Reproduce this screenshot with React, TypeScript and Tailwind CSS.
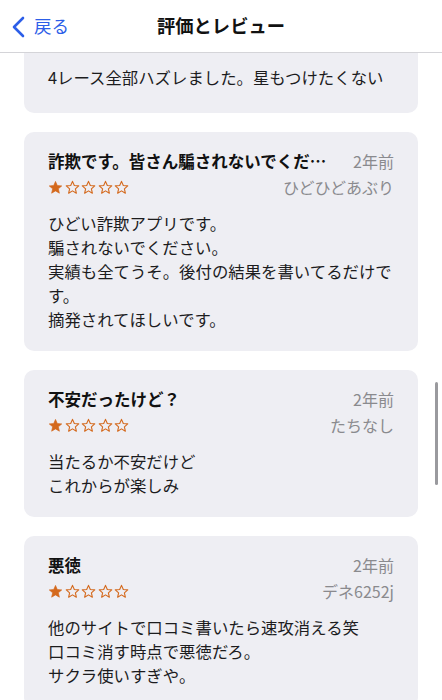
import React from 'react';

interface Review {
  title: string;
  date: string;
  author: string;
  rating: number;
  body: string;
}

const reviews: Review[] = [
  {
    title: '詐欺です。皆さん騙されないでくだ…',
    date: '2年前',
    author: 'ひどひどあぶり',
    rating: 1,
    body: 'ひどい詐欺アプリです。\n騙されないでください。\n実績も全てうそ。後付の結果を書いてるだけです。\n摘発されてほしいです。',
  },
  {
    title: '不安だったけど？',
    date: '2年前',
    author: 'たちなし',
    rating: 1,
    body: '当たるか不安だけど\nこれからが楽しみ',
  },
  {
    title: '悪徳',
    date: '2年前',
    author: 'デネ6252j',
    rating: 1,
    body: '他のサイトで口コミ書いたら速攻消える笑\n口コミ消す時点で悪徳だろ。\nサクラ使いすぎや。',
  },
];

const Star = ({ filled }: { filled: boolean }) => (
  <svg width="15" height="15" viewBox="0 0 24 24" className="shrink-0">
    <path
      d="M12 2.2l2.9 6.6 7.1.6-5.4 4.7 1.6 7-6.2-3.7-6.2 3.7 1.6-7L2 9.4l7.1-.6z"
      fill={filled ? '#d4691d' : 'none'}
      stroke="#d4691d"
      strokeWidth={filled ? 1 : 1.8}
      strokeLinejoin="round"
    />
  </svg>
);

const Stars = ({ rating }: { rating: number }) => (
  <div className="flex items-center gap-[1.5px]">
    {[0, 1, 2, 3, 4].map((i) => (
      <Star key={i} filled={i < rating} />
    ))}
  </div>
);

const ReviewCard = ({ review }: { review: Review }) => (
  <div className="rounded-[10px] bg-[#eeeef3] px-6 pt-[17px] pb-5">
    {/* Title + date */}
    <div className="flex items-center justify-between gap-3 leading-[24px]">
      <p className="truncate text-[16.5px] font-bold text-[#111]">{review.title}</p>
      <span className="shrink-0 text-[16px] text-[#8a8a8e]">{review.date}</span>
    </div>

    {/* Stars + author */}
    <div className="mt-[2px] flex h-[24px] items-center justify-between">
      <Stars rating={review.rating} />
      <span className="text-[16px] leading-[24px] text-[#8a8a8e]">{review.author}</span>
    </div>

    {/* Body */}
    <p className="mt-3 whitespace-pre-line text-[16.4px] leading-[24px] text-[#1c1c1e]">
      {review.body}
    </p>
  </div>
);

export default function App() {
  return (
    <div
      className="relative h-[700px] w-[442px] overflow-hidden bg-white"
      style={{ fontFamily: '"Noto Sans CJK JP", "Noto Sans", sans-serif' }}
    >
      {/* Navigation bar */}
      <header className="relative flex h-[53px] items-center border-b border-[#d4d4d8] bg-white">
        <button className="flex items-center gap-[9px] pl-[11px] text-[#2c5ee8]">
          <svg width="14" height="22" viewBox="0 0 14 22" fill="none" className="mt-[2px]">
            <path d="M12 2L3 11l9 9" stroke="currentColor" strokeWidth="2.6" strokeLinecap="round" strokeLinejoin="round" />
          </svg>
          <span className="text-[17.5px] leading-none">戻る</span>
        </button>
        <h1 className="absolute left-1/2 -translate-x-1/2 text-[18.3px] font-semibold text-[#111]">
          評価とレビュー
        </h1>
      </header>

      {/* Review list (scrolled) */}
      <main className="flex flex-col gap-[19px] px-6">
        <div className="rounded-b-[10px] bg-[#eeeef3] px-6 pt-[12px] pb-[24px]">
          <p className="text-[16.4px] leading-[24px] text-[#1c1c1e]">4レース全部ハズレました。星もつけたくない</p>
        </div>
        {reviews.map((r, i) => (
          <ReviewCard key={i} review={r} />
        ))}
      </main>

      {/* Scroll indicator */}
      <div className="absolute right-[4px] top-[382px] h-[103px] w-[3px] rounded-full bg-[#9a9a9e]" />
    </div>
  );
}
